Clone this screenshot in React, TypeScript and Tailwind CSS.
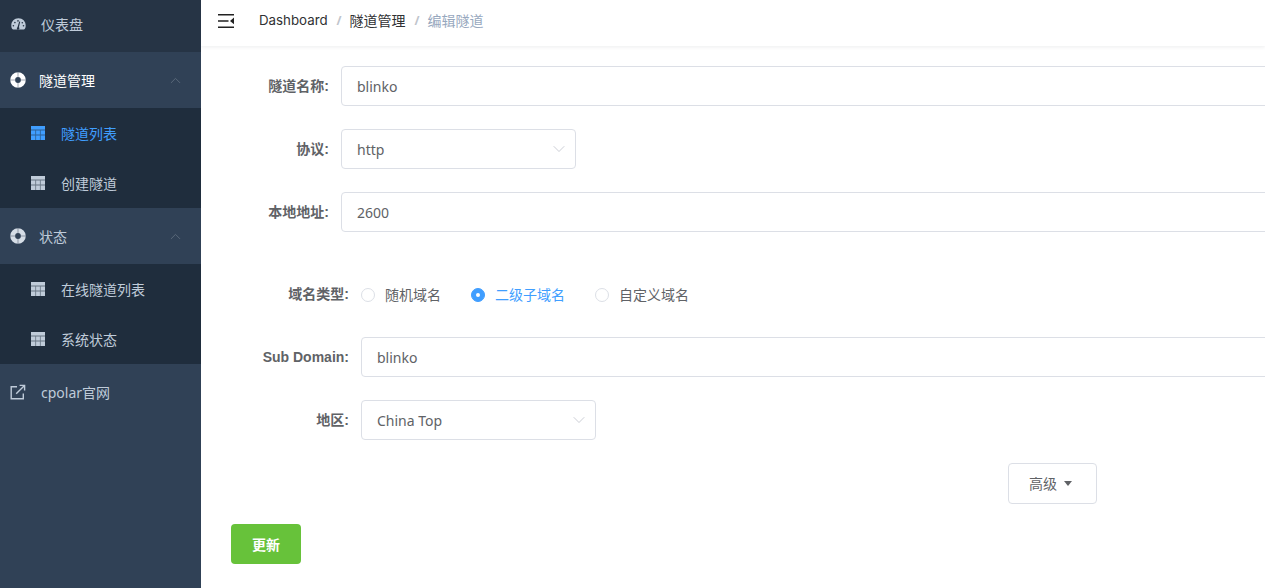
import type { ReactNode } from "react";
import { ChevronDown, ChevronUp } from "lucide-react";

const font = "font-['Noto_Sans','Noto_Sans_CJK_SC',sans-serif]";

function GaugeIcon() {
    return (
        <svg width="15" height="12" viewBox="0 0 15 12" className="text-[#bfcbd9]">
            <path fill="currentColor" fillRule="evenodd" d="M7.5 0.3C3.3 0.3 0.3 3.5 0.3 7.4c0 1.4 0.3 2.7 1 3.6 0.2 0.3 0.5 0.5 0.9 0.5h10.6c0.4 0 0.7-0.2 0.9-0.5 0.7-0.9 1-2.2 1-3.6 0-3.9-3-7.1-7.2-7.1zM6.5 9.2L8.2 3.4l1 0.3-1.3 5.6a1.2 1.2 0 1 1-1.4-0.1zM2.4 7a0.8 0.8 0 1 1 0 1.6 0.8 0.8 0 0 1 0-1.6zm1.5-3.2a0.8 0.8 0 1 1 0 1.6 0.8 0.8 0 0 1 0-1.6zM7 2.1a0.8 0.8 0 1 1 0 1.6 0.8 0.8 0 0 1 0-1.6zm4.3 1.9a0.8 0.8 0 1 1 0 1.6 0.8 0.8 0 0 1 0-1.6zm1.2 3a0.8 0.8 0 1 1 0 1.6 0.8 0.8 0 0 1 0-1.6z" />
        </svg>
    );
}

function RingIcon({ active }: { active?: boolean }) {
    return (
        <svg width="16" height="16" viewBox="0 0 16 16" className={active ? "text-white" : "text-[#d5dde6]"}>
            <path fill="currentColor" fillRule="evenodd" d="M8 0.2a7.8 7.8 0 1 1 0 15.6A7.8 7.8 0 0 1 8 0.2zm0 4.9a2.9 2.9 0 1 0 0 5.8 2.9 2.9 0 0 0 0-5.8z" />
            <path fill="#304156" opacity="0.45" d="M0 7.5h5v1H0zM11 7.5h5v1h-5zM7.5 0h1v5h-1zM7.5 11h1v5h-1z" />
        </svg>
    );
}

function TableIcon({ active }: { active?: boolean }) {
    return (
        <svg width="14" height="14" viewBox="0 0 14 14" className={active ? "text-[#409eff]" : "text-[#bfcbd9]"}>
            <rect width="14" height="14" fill="currentColor" />
            <path fill="#1f2d3d" opacity="0.55" d="M0 3.6h14v0.8H0zM0 8.6h14v0.8H0zM4.3 4h0.8v10h-0.8zM8.9 4h0.8v10h-0.8z" />
        </svg>
    );
}

function LinkIcon() {
    return (
        <svg width="16" height="16" viewBox="0 0 16 16" fill="none" stroke="currentColor" className="text-[#bfcbd9]">
            <path strokeWidth="1.4" d="M7 2.7H1.2v12.1h12.1V9.5" />
            <path strokeWidth="1.4" d="M6.2 9.8L14 2" />
            <path strokeWidth="1.4" d="M9.6 1.4h5v5" />
        </svg>
    );
}

function MenuToggle() {
    return (
        <svg width="16" height="14" viewBox="0 0 16 14" className="text-[#222]">
            <path fill="currentColor" d="M0 0h16v1.5H0zM0 6.2h10.5v1.5H0zM0 12.4h16v1.5H0zM16 3.6v6.6L12 7z" />
        </svg>
    );
}

function SubMenu({ items }: { items: { label: string; active?: boolean }[] }) {
    return (
        <div className="bg-[#1f2d3d]">
            {items.map((item) => (
                <div key={item.label} className="h-[50px] flex items-center pl-[31px]">
                    <TableIcon active={item.active} />
                    <span className={`ml-[16px] text-[14px] ${item.active ? "text-[#409eff]" : "text-[#bfcbd9]"}`}>
                        {item.label}
                    </span>
                </div>
            ))}
        </div>
    );
}

function MenuGroup({ label, active }: { label: string; active?: boolean }) {
    return (
        <div className="h-14 flex items-center pl-[10px] pr-[17px]">
            <RingIcon active={active} />
            <span className={`ml-[13px] text-[14px] ${active ? "text-white" : "text-[#bfcbd9]"}`}>{label}</span>
            <ChevronUp className="ml-auto w-[17px] h-[17px] text-[#5d6b7c]" strokeWidth={1.3} />
        </div>
    );
}

function Sidebar() {
    return (
        <aside className="w-[201px] shrink-0 h-full bg-[#304156]">
            <div className="h-[52px] bg-[#263445] flex items-center pl-[11px] pb-[4px]">
                <GaugeIcon />
                <span className="ml-[15px] text-[14px] text-[#bfcbd9]">仪表盘</span>
            </div>
            <MenuGroup label="隧道管理" active />
            <SubMenu items={[{ label: "隧道列表", active: true }, { label: "创建隧道" }]} />
            <MenuGroup label="状态" />
            <SubMenu items={[{ label: "在线隧道列表" }, { label: "系统状态" }]} />
            <div className="h-14 flex items-center pl-[10px]">
                <LinkIcon />
                <span className="ml-[15px] text-[14px] text-[#bfcbd9]">cpolar官网</span>
            </div>
        </aside>
    );
}

function Header() {
    return (
        <header className="h-[46px] shrink-0 flex items-center pl-[17px] pb-[5px] bg-white shadow-[0_1px_4px_rgba(0,21,41,0.08)] text-[14px]">
            <MenuToggle />
            <span className="ml-[25px] text-[#303133] font-['Inter',sans-serif] text-[13.3px] pt-px">Dashboard</span>
            <span className="ml-[9px] mr-[8px] text-[#c0c4cc] font-bold text-[12px]">/</span>
            <span className="text-[#303133]">隧道管理</span>
            <span className="ml-[9px] mr-[8px] text-[#c0c4cc] font-bold text-[12px]">/</span>
            <span className="text-[#97a8be]">编辑隧道</span>
        </header>
    );
}

function Row({ label, wide, short, children }: { label: string; wide?: boolean; short?: boolean; children: ReactNode }) {
    return (
        <div className={`flex items-center mb-[23px] ${short ? "h-[39px]" : "h-10"}`}>
            <label className={`shrink-0 text-right pr-[12px] text-[14px] font-bold text-[#606266] font-['Liberation_Sans','Noto_Sans_CJK_SC',sans-serif] ${wide ? "w-[130px]" : "w-[110px]"}`}>
                {label}
            </label>
            {children}
        </div>
    );
}

function TextInput({ value }: { value: string }) {
    return (
        <div className="w-[1000px] shrink-0 h-10 flex items-center px-[15px] border border-[#dcdfe6] rounded text-[14px] text-[#606266]">
            {value}
        </div>
    );
}

function Select({ value }: { value: string }) {
    return (
        <div className="w-[235px] shrink-0 h-10 flex items-center justify-between pl-[15px] pr-[6px] border border-[#dcdfe6] rounded text-[14px] text-[#606266]">
            {value}
            <ChevronDown className="w-[20px] h-[20px] text-[#c0c4cc]" strokeWidth={1} />
        </div>
    );
}

function Radio({ label, checked }: { label: string; checked?: boolean }) {
    return (
        <div className="flex items-center mr-[30px]">
            <span className={`mt-px w-[14px] h-[14px] rounded-full border flex items-center justify-center ${checked ? "bg-[#409eff] border-[#409eff]" : "bg-white border-[#dcdfe6]"}`}>
                {checked && <span className="w-1 h-1 rounded-full bg-white" />}
            </span>
            <span className={`ml-[10px] text-[14px] ${checked ? "text-[#409eff]" : "text-[#606266]"}`}>{label}</span>
        </div>
    );
}

export default function App() {
    return (
        <div className={`w-[1265px] h-[588px] flex overflow-hidden bg-white ${font}`}>
            <Sidebar />
            <main className="flex-1 min-w-0 flex flex-col overflow-hidden">
                <Header />
                <form className="pl-[30px] pt-[20px]">
                    <Row label="隧道名称:"><TextInput value="blinko" /></Row>
                    <Row label="协议:"><Select value="http" /></Row>
                    <Row label="本地地址:"><TextInput value="2600" /></Row>

                    <div className="mt-[43px]">
                        <Row label="域名类型:" wide short>
                            <Radio label="随机域名" />
                            <Radio label="二级子域名" checked />
                            <Radio label="自定义域名" />
                        </Row>
                        <Row label="Sub Domain:" wide><TextInput value="blinko" /></Row>
                        <Row label="地区:" wide><Select value="China Top" /></Row>
                    </div>

                    <div className="flex">
                        <button type="button" className="ml-[777px] w-[89px] h-[41px] flex items-center pl-[20px] gap-[7px] bg-white border border-[#dcdfe6] rounded text-[14px] text-[#606266]">
                            高级
                            <span className="w-0 h-0 border-x-[4.5px] border-x-transparent border-t-[5px] border-t-[#606266]" />
                        </button>
                    </div>

                    <button type="button" className="mt-[20px] w-[70px] h-10 bg-[#67c23a] rounded text-[14px] font-bold text-white">
                        更新
                    </button>
                </form>
            </main>
        </div>
    );
}
